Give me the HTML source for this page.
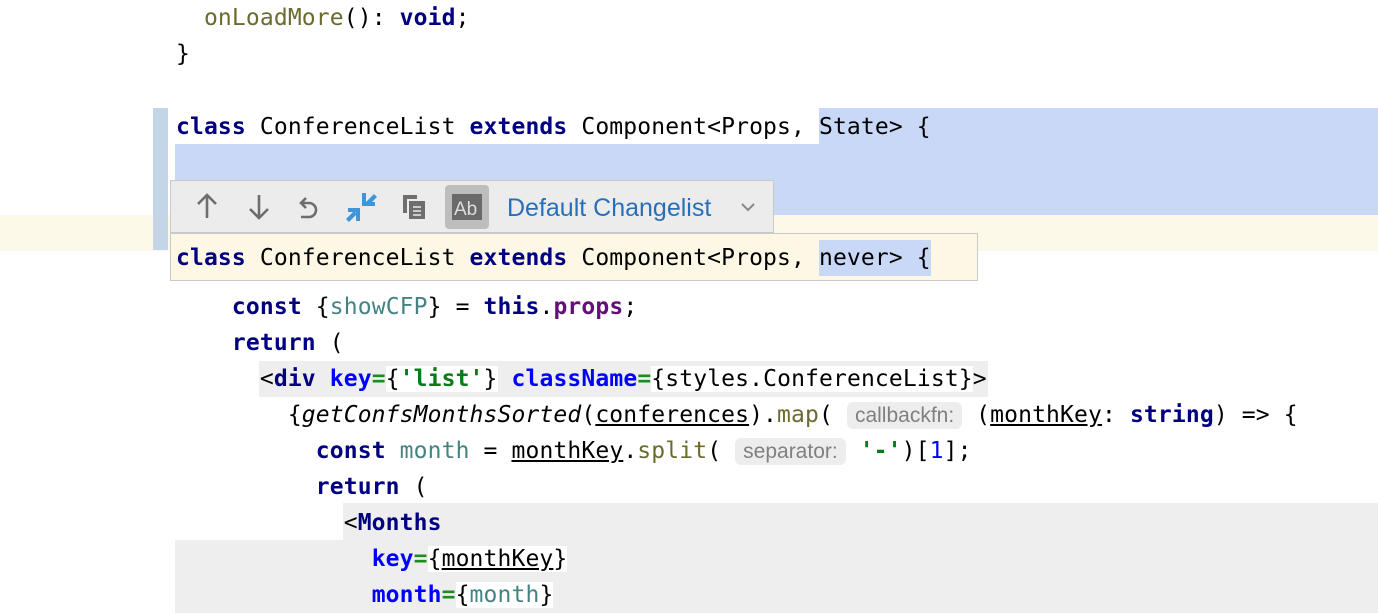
<!DOCTYPE html>
<html><head><meta charset="utf-8"><style>
body{margin:0;width:1378px;height:613px;overflow:hidden;background:#fff;position:relative;font-family:"DejaVu Sans Mono","Liberation Mono",monospace;font-size:23px;color:#000}
.l{position:absolute;left:176px;height:36px;line-height:36px;white-space:pre;letter-spacing:0.13px}
.k{color:#000080;font-weight:bold}
.f{color:#6b6b2f}
.v{color:#458383}
.a{color:#0000ff;font-weight:bold}
.s{color:#067d17;font-weight:bold}
.g{color:#1f8a1f;font-weight:bold}
.p{color:#660e7a;font-weight:bold}
.n{color:#0000ff}
.u{text-decoration:underline}
.h{font-family:"Liberation Sans",sans-serif;font-size:21px;letter-spacing:0;color:#808080;background:#ededed;border-radius:6px;padding:2px 8px;}
.bx{position:absolute}
</style></head><body>
<div class="bx" style="left:819px;top:108px;width:559px;height:36px;background:#c9d8f6"></div>
<div class="bx" style="left:175px;top:144px;width:1203px;height:71px;background:#c9d8f6"></div>
<div class="bx" style="left:0;top:215px;width:1378px;height:36px;background:#fdf9e8"></div>
<div class="bx" style="left:153px;top:108px;width:15px;height:142px;background:#c4d5e7"></div>
<div class="bx" style="left:259px;top:361px;width:729px;height:36px;background:#eee"></div>
<div class="bx" style="left:343px;top:503px;width:1035px;height:37px;background:#eee"></div>
<div class="bx" style="left:175px;top:540px;width:1203px;height:73px;background:#eee"></div>

<div class="l" style="top:0"><span class="f">  onLoadMore</span>(): <span class="k">void</span>;</div>
<div class="l" style="top:36px">}</div>
<div class="l" style="top:109px"><span class="k">class</span> ConferenceList <span class="k">extends</span> Component&lt;Props, State&gt; {</div>
<div class="l" style="top:289px">    <span class="k">const</span> {<span class="v">showCFP</span>} = <span class="k">this</span>.<span class="p">props</span>;</div>
<div class="l" style="top:325px">    <span class="k">return</span> (</div>
<div class="l" style="top:361px">      &lt;<span class="k">div</span> <span class="a">key</span><span class="g">=</span><span style="background:#fff">{<span class="s">'list'</span>}</span> <span class="a">className</span><span class="g">=</span><span style="background:#fff">{styles.ConferenceList}</span>&gt;</div>
<div class="l" style="top:397px">        {<i>getConfsMonthsSorted</i>(<span class="u">conferences</span>).<span class="f">map</span>( <span class="h">callbackfn:</span> (<span class="u">monthKey</span>: <span class="k">string</span>) =&gt; {</div>
<div class="l" style="top:433px">          <span class="k">const</span> <span class="v">month</span> = <span class="u">monthKey</span>.<span class="f">split</span>( <span class="h">separator:</span> <span class="s">'-'</span>)[<span class="n">1</span>];</div>
<div class="l" style="top:469px">          <span class="k">return</span> (</div>
<div class="l" style="top:505px">            &lt;<span class="k">Months</span></div>
<div class="l" style="top:541px">              <span class="a">key</span><span class="g">=</span><span style="background:#fff">{<span class="u">monthKey</span>}</span></div>
<div class="l" style="top:577px">              <span class="a">month</span><span class="g">=</span><span style="background:#fff">{<span class="v">month</span>}</span></div>

<div class="bx" style="left:170px;top:180px;width:604px;height:53px;background:#ececec;border:1px solid #c9c9c9;box-sizing:border-box"></div>
<svg class="bx" style="left:190px;top:185px" width="600" height="46" viewBox="0 0 600 46">
<g stroke="#6e6e6e" stroke-width="2.6" fill="none">
<path d="M17 33V10M8 19l9-9 9 9"/>
<path d="M69 10v23M60 24l9 9 9-9"/>
<path d="M116 13l-5 5 5 5M111 18h8a7 7 0 0 1 0 14h-8"/>
</g>
<g fill="#3d96d8"><path d="M172 8h4v9h9v4h-13zM158 23h12v13h-4v-9h-8z"/><path d="M176 17l8-8 3 3-8 8z M156 34l8-8 3 3-8 8z"/></g>
<g fill="#6e6e6e"><rect x="213" y="10" width="4" height="18"/><rect x="213" y="10" width="14" height="4"/><rect x="219" y="16" width="16" height="18"/></g>
<g stroke="#ececec" stroke-width="1.5"><path d="M223 22h8M223 26h8M223 30h8"/></g>
<rect x="255" y="0" width="44" height="44" rx="4" fill="#bdbdbd"/>
<rect x="262" y="9" width="30" height="26" fill="#6a6a6a"/>
<text x="264" y="30" font-family="Liberation Sans,sans-serif" font-size="19" fill="#ddd">Ab</text>
<path d="M552 19l6 6 6-6" stroke="#888" stroke-width="2" fill="none"/>
</svg>
<div class="bx" style="left:507px;top:192px;font-family:'Liberation Sans',sans-serif;font-size:25px;color:#2a6fb5;line-height:32px">Default Changelist</div>
<div class="bx" style="left:170px;top:233px;width:808px;height:48px;background:#fdf8e6;border:1px solid #c9c9c9;box-sizing:border-box"></div>
<div class="bx" style="left:819px;top:240px;width:112px;height:36px;background:#c9d8f6"></div>
<div class="l" style="top:240px"><span class="k">class</span> ConferenceList <span class="k">extends</span> Component&lt;Props, never&gt; {</div>
</body></html>
